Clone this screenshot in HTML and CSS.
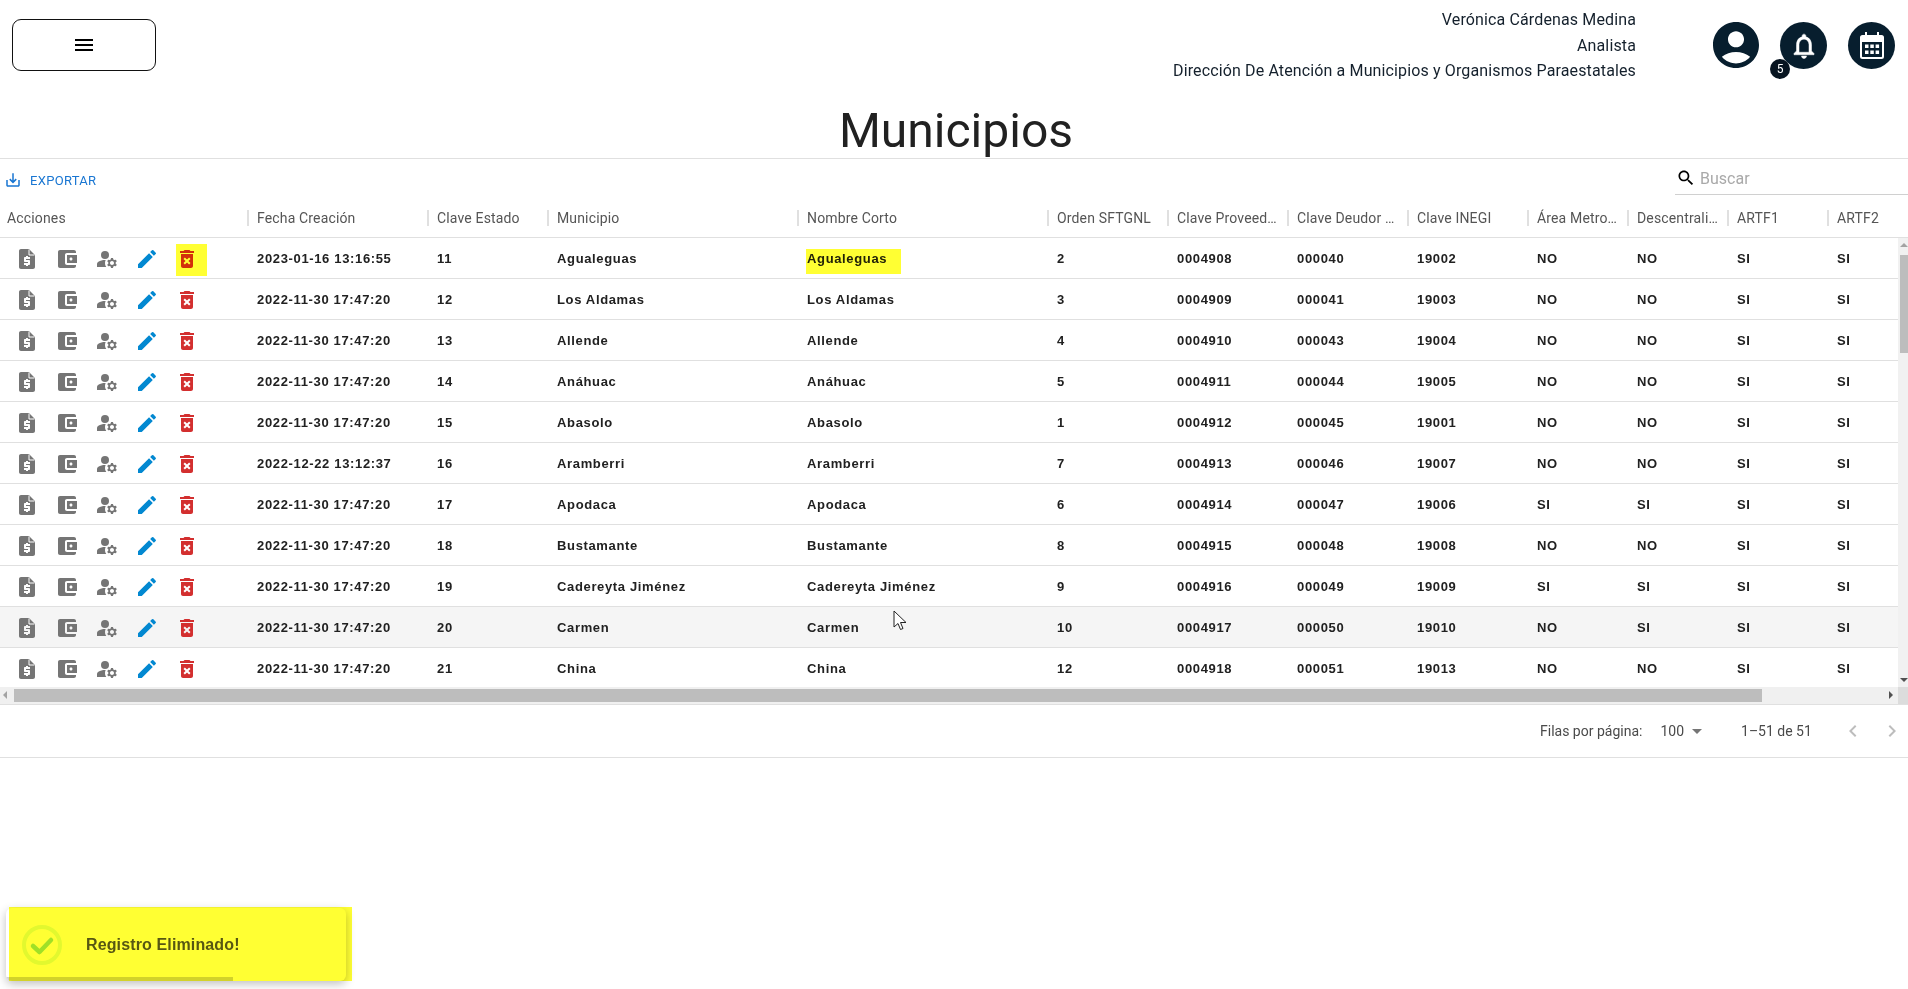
FILE: index.html
```html
<!DOCTYPE html>
<html lang="es">
<head>
  <meta charset="UTF-8" />
  <title>Municipios</title>
  <link rel="stylesheet" href="styles.css">
</head>
<body>

  <svg class="defs" width="0" height="0">
    <symbol id="i-quote" viewBox="0 0 24 24"><path d="M14 2H6c-1.100 0-1.990.9-1.990 2L4 20c0 1.100.89 2 1.990 2H18c1.100 0 2-.9 2-2V8l-6-6zm1 10h-4v1h3c.55 0 1 .45 1 1v3c0 .55-.45 1-1 1h-1v1h-2v-1H9v-2h4v-1h-3c-.55 0-1-.45-1-1v-3c0-.55.45-1 1-1h1V9h2v1h2v2z"/><path d="M14 2.500V8h5.500" fill="none" stroke="#fff" stroke-width="1"/></symbol>
    <symbol id="i-wallet" viewBox="0 0 24 24"><path d="M21 18v1c0 1.1-.9 2-2 2H5c-1.11 0-2-.9-2-2V5c0-1.1.89-2 2-2h14c1.1 0 2 .9 2 2v1h-9c-1.11 0-2 .9-2 2v8c0 1.1.89 2 2 2h9zm-9-2h10V8H12v8zm4-2.5c-.83 0-1.5-.67-1.5-1.5s.67-1.5 1.5-1.5 1.5.67 1.5 1.5-.67 1.5-1.5 1.5z"/></symbol>
    <symbol id="i-manage" viewBox="0 0 24 24"><circle cx="10" cy="8" r="4"/><path d="M10.67 13.02c-.22-.01-.44-.02-.67-.02-2.42 0-4.68.67-6.61 1.82-.88.52-1.39 1.5-1.39 2.53V20h9.26c-.79-1.13-1.26-2.51-1.26-4 0-1.07.25-2.07.67-2.98z"/><path d="M20.75 16c0-.22-.03-.42-.06-.63l1.14-1.01-1-1.73-1.45.49c-.32-.27-.68-.48-1.08-.63L18 11h-2l-.3 1.49c-.4.15-.76.36-1.08.63l-1.45-.49-1 1.73 1.14 1.01c-.03.21-.06.41-.06.63s.03.42.06.63l-1.14 1.01 1 1.73 1.45-.49c.32.27.68.48 1.08.63L16 21h2l.3-1.49c.4-.15.76-.36 1.08-.63l1.45.49 1-1.73-1.14-1.01c.03-.21.06-.41.06-.63zM17 18c-1.1 0-2-.9-2-2s.9-2 2-2 2 .9 2 2-.9 2-2 2z"/></symbol>
    <symbol id="i-edit" viewBox="0 0 24 24"><path d="M3 17.25V21h3.75L17.81 9.94l-3.75-3.75L3 17.25zM20.71 7.04c.39-.39.39-1.02 0-1.41l-2.34-2.34a.9959.9959 0 0 0-1.41 0l-1.83 1.83 3.75 3.75 1.83-1.83z"/></symbol>
    <symbol id="i-delete" viewBox="0 0 24 24"><path d="M6 19c0 1.1.9 2 2 2h8c1.1 0 2-.9 2-2V7H6v12zm2.46-7.12 1.41-1.41L12 12.59l2.12-2.12 1.41 1.41L13.41 14l2.12 2.12-1.41 1.41L12 15.41l-2.12 2.12-1.41-1.41L10.59 14l-2.13-2.12zM15.5 4l-1-1h-5l-1 1H5v2h14V4z"/></symbol>
  </svg>

  <header class="topbar">
    <button class="menu-btn" aria-label="menu">
      <svg width="24" height="24" viewBox="0 0 24 24"><path d="M3 18h18v-2H3v2zm0-5h18v-2H3v2zm0-7v2h18V6H3z"/></svg>
    </button>
    <div class="user-info">
      <div>Verónica Cárdenas Medina</div>
      <div>Analista</div>
      <div>Dirección De Atención a Municipios y Organismos Paraestatales</div>
    </div>
    <div class="user-icons">
      <svg class="avatar" viewBox="2 2 20 20"><path d="M12 2C6.48 2 2 6.48 2 12s4.48 10 10 10 10-4.48 10-10S17.52 2 12 2zm0 4c1.93 0 3.5 1.57 3.5 3.5S13.93 13 12 13s-3.5-1.57-3.5-3.5S10.07 6 12 6zm0 14c-2.03 0-4.43-.82-6.14-2.88C7.55 15.8 9.68 15 12 15s4.45.8 6.14 2.12C16.43 19.18 14.03 20 12 20z"/></svg>
      <div class="round-icon bell">
        <svg class="bell-icon" width="30" height="30" viewBox="0 0 24 24"><path d="M12 22c1.1 0 2-.9 2-2h-4c0 1.1.9 2 2 2zm6-6v-5c0-3.07-1.63-5.64-4.5-6.32V4c0-.83-.67-1.5-1.5-1.5s-1.5.67-1.5 1.5v.68C7.64 5.36 6 7.92 6 11v5l-2 2v1h16v-1l-2-2zm-2 1H8v-6c0-2.48 1.51-4.5 4-4.5s4 2.02 4 4.5v6z"/></svg>
        <span class="badge">5</span>
      </div>
      <div class="round-icon">
        <svg width="24" height="27" viewBox="0 0 24 27"><path d="M5 0h2v3h10V0h2v3h2.500A2.500 2.500 0 0 1 24 5.500v19a2.500 2.500 0 0 1-2.500 2.500h-19A2.500 2.500 0 0 1 0 24.500v-19A2.500 2.500 0 0 1 2.500 3H5zM2 10v14.500c0 .3.2.5.5.5h19c.3 0 .5-.2.5-.5V10z"/><path d="M5 12.500h3.500V16H5zM10.300 12.500h3.500V16h-3.500zM15.600 12.500h3.500V16h-3.500zM5 18.500h3.500V22H5zM10.300 18.500h3.500V22h-3.500zM15.600 18.500h3.500V22h-3.500z"/></svg>
      </div>
    </div>
  </header>

  <h1 class="page-title">Municipios</h1>

  <section class="grid">
    <div class="toolbar">
      <button class="export-btn">
        <svg width="18" height="18" viewBox="0 0 24 24"><path d="M19 12v7H5v-7H3v7c0 1.100.9 2 2 2h14c1.100 0 2-.9 2-2v-7h-2zm-6 .67l2.590-2.580L17 11.500l-5 5-5-5 1.410-1.410L11 12.670V3h2z"/></svg>
        Exportar
      </button>
      <div class="search">
        <svg width="20" height="20" viewBox="0 0 24 24"><path d="M15.500 14h-.79l-.28-.27C15.410 12.590 16 11.110 16 9.500 16 5.910 13.090 3 9.500 3S3 5.910 3 9.500 5.910 16 9.500 16c1.610 0 3.090-.59 4.230-1.570l.27.28v.79l5 4.990L20.490 19l-4.990-5zm-6 0C7.010 14 5 11.990 5 9.500S7.010 5 9.500 5 14 7.010 14 9.500 11.990 14 9.500 14z"/></svg>
        <span>Buscar</span>
      </div>
    </div>

    <div class="row head">
      <div class="head-first">Acciones</div>
      <div class="head-cell"><span>Fecha Creación</span></div>
      <div class="head-cell"><span>Clave Estado</span></div>
      <div class="head-cell"><span>Municipio</span></div>
      <div class="head-cell"><span>Nombre Corto</span></div>
      <div class="head-cell"><span>Orden SFTGNL</span></div>
      <div class="head-cell"><span>Clave Proveed…</span></div>
      <div class="head-cell"><span>Clave Deudor …</span></div>
      <div class="head-cell"><span>Clave INEGI</span></div>
      <div class="head-cell"><span>Área Metro…</span></div>
      <div class="head-cell"><span>Descentrali…</span></div>
      <div class="head-cell"><span>ARTF1</span></div>
      <div class="head-cell"><span>ARTF2</span></div>
    </div>

    <div class="body-wrap">
      <div class="rows" id="rows"></div>
      <div class="vscroll">
        <i class="arrow up"></i>
        <div class="vthumb"></div>
        <i class="arrow down"></i>
      </div>
    </div>

    <div class="hscroll">
      <i class="arrow left"></i>
      <div class="hthumb"></div>
      <i class="arrow right"></i>
      <div class="corner"></div>
    </div>

    <div class="pager">
      <span>Filas por página:</span>
      <span class="pager-size">100 <i class="caret"></i></span>
      <span class="pager-range">1–51 de 51</span>
      <svg class="chev" width="24" height="24" viewBox="0 0 24 24"><path d="M15.410 7.410 14 6l-6 6 6 6 1.410-1.410L10.830 12z"/></svg>
      <svg class="chev" width="24" height="24" viewBox="0 0 24 24"><path d="M10 6 8.590 7.410 13.170 12l-4.580 4.590L10 18l6-6z"/></svg>
    </div>
  </section>

  <!-- yellow marker drawn over the screenshot -->
  <div class="mark mark-trash"></div>
  <div class="mark mark-name"></div>

  <div class="toast">
    <svg class="toast-check" width="40" height="40" viewBox="0 0 40 40">
      <circle cx="20" cy="20" r="18" fill="none" stroke="#e2f8e6" stroke-width="4"/>
      <path d="M11 21l6.500 6L29 15" fill="none" stroke="#a0e0c0" stroke-width="4.500" stroke-linecap="round" stroke-linejoin="round"/>
    </svg>
    <span>Registro Eliminado!</span>
    <div class="toast-bar"></div>
  </div>
  <div class="mark mark-toast"></div>

  <svg class="cursor" width="14" height="21" viewBox="0 0 14 21"><path d="M1 1v16l4-3.500 2.500 6 2.500-1-2.500-6H13z" fill="#fff" stroke="#222" stroke-width="1"/></svg>

  <script>
    const data = [
      ["2023-01-16 13:16:55", 11, "Agualeguas", 2, "0004908", "000040", 19002, "NO", "NO"],
      ["2022-11-30 17:47:20", 12, "Los Aldamas", 3, "0004909", "000041", 19003, "NO", "NO"],
      ["2022-11-30 17:47:20", 13, "Allende", 4, "0004910", "000043", 19004, "NO", "NO"],
      ["2022-11-30 17:47:20", 14, "Anáhuac", 5, "0004911", "000044", 19005, "NO", "NO"],
      ["2022-11-30 17:47:20", 15, "Abasolo", 1, "0004912", "000045", 19001, "NO", "NO"],
      ["2022-12-22 13:12:37", 16, "Aramberri", 7, "0004913", "000046", 19007, "NO", "NO"],
      ["2022-11-30 17:47:20", 17, "Apodaca", 6, "0004914", "000047", 19006, "SI", "SI"],
      ["2022-11-30 17:47:20", 18, "Bustamante", 8, "0004915", "000048", 19008, "NO", "NO"],
      ["2022-11-30 17:47:20", 19, "Cadereyta Jiménez", 9, "0004916", "000049", 19009, "SI", "SI"],
      ["2022-11-30 17:47:20", 20, "Carmen", 10, "0004917", "000050", 19010, "NO", "SI"],
      ["2022-11-30 17:47:20", 21, "China", 12, "0004918", "000051", 19013, "NO", "NO"]
    ];

    const icons = ["quote", "wallet", "manage", "edit", "delete"]
      .map(name => `<svg class="act act-${name}"><use href="#i-${name}"/></svg>`)
      .join("");

    document.getElementById("rows").innerHTML = data.map((d, i) => {
      const cells = [d[0], d[1], d[2], d[2], d[3], d[4], d[5], d[6], d[7], d[8], "SI", "SI"];
      const hover = i === 9 ? " hover" : "";
      return `<div class="row data${hover}"><div class="actions">${icons}</div>` +
        cells.map(c => `<div class="cell">${c}</div>`).join("") + `</div>`;
    }).join("");
  </script>

</body>
</html>
```

FILE: styles.css
```css
* {
  box-sizing: border-box;
}

body {
  margin: 0;
  height: 989px;
  overflow: hidden;
  position: relative;
  background: #fff;
  font-family: Roboto, sans-serif;
  color: #212121;
}

.defs {
  display: block;
  height: 0;
}

.topbar {
  display: flex;
  height: 102px;
  padding-left: 12px;
}

.menu-btn {
  width: 144px;
  height: 52px;
  margin-top: 19px;
  display: flex;
  align-items: center;
  justify-content: center;
  background: #fff;
  border: 1px solid #111;
  border-radius: 9px;
}

.user-info {
  margin-left: auto;
  padding-top: 7px;
  text-align: right;
  font-size: 16px;
  line-height: 26px;
  letter-spacing: 0.13px;
  color: #14202c;
}

.user-info div:last-child {
  line-height: 24px;
}

.user-icons {
  display: flex;
  align-items: flex-start;
  gap: 21px;
  width: 272px;
  padding: 22px 0 0 77px;
}

.avatar {
  width: 46px;
  height: 46px;
  fill: #071e2e;
}

.round-icon {
  position: relative;
  width: 47px;
  height: 47px;
  display: flex;
  align-items: center;
  justify-content: center;
  background: #071e2e;
  border-radius: 50%;
  fill: #fff;
}

.bell-icon {
  stroke: #fff;
  stroke-width: 0.4;
}

.badge {
  position: absolute;
  left: -10px;
  top: 37px;
  width: 20px;
  height: 20px;
  border-radius: 50%;
  background: #071420;
  color: #fff;
  font-size: 12px;
  line-height: 20px;
  text-align: center;
}

.page-title {
  margin: 0;
  height: 56px;
  padding-left: 4px;
  text-align: center;
  font-size: 48px;
  font-weight: 400;
  line-height: 58px;
}

.grid {
  border-top: 1px solid #e0e0e0;
}

.toolbar {
  display: flex;
  justify-content: space-between;
  height: 36px;
}

.export-btn {
  display: flex;
  align-items: center;
  gap: 8px;
  height: 36px;
  padding: 6px 0 0 4px;
  border: none;
  background: none;
  color: #1976d2;
  fill: #1976d2;
  font-family: Roboto, sans-serif;
  font-size: 13px;
  letter-spacing: 0.3px;
  text-transform: uppercase;
}

.search {
  display: flex;
  align-items: center;
  gap: 4px;
  width: 233px;
  height: 36px;
  padding: 3px 0 0 1px;
  border-bottom: 1px solid #d0d0d0;
  color: #a9a9a9;
  font-size: 16px;
}

.row {
  display: grid;
  grid-template-columns: 247px 180px 120px 250px 250px 120px 120px 120px 120px 100px 100px 100px 73px;
  width: 1898px;
}

.head {
  width: 1908px;
  height: 43px;
  align-items: center;
  padding-top: 4px;
  border-bottom: 1px solid #e0e0e0;
  font-size: 14px;
  letter-spacing: 0.15px;
  color: #555;
}

.head-first {
  padding-left: 7px;
}

.head-cell span {
  display: block;
  height: 16px;
  line-height: 16px;
  padding-left: 8px;
  border-left: 2px solid #e0e0e0;
  white-space: nowrap;
}

.body-wrap {
  display: flex;
  height: 449px;
}

.rows {
  width: 1898px;
  overflow: hidden;
}

.data {
  height: 41px;
  align-items: center;
  border-bottom: 1px solid #e0e0e0;
  font-size: 13px;
  font-weight: 700;
  font-family: "Liberation Sans", sans-serif;
  letter-spacing: 0.65px;
  color: #212121;
}

.data.hover {
  background: #f5f5f5;
}

.cell {
  padding-left: 10px;
  white-space: nowrap;
}

.actions {
  display: flex;
  gap: 16px;
  padding: 2px 0 0 15px;
}

.act {
  width: 24px;
  height: 24px;
  fill: #757575;
}

.act-edit {
  fill: #0288d1;
}

.act-delete {
  fill: #d32f2f;
}

.vscroll {
  position: relative;
  width: 10px;
  background: #f1f1f1;
}

.vthumb {
  width: 8px;
  height: 98px;
  margin: 17px 0 0 2px;
  background: #bdbdbd;
}

.hscroll {
  position: relative;
  height: 17px;
  padding: 2px 0 0 14px;
  background: #f0f0f0;
}

.hthumb {
  width: 1748px;
  height: 13px;
  background: #bdbdbd;
}

.corner {
  position: absolute;
  right: 0;
  top: 0;
  width: 10px;
  height: 17px;
  background: #dcdcdc;
}

.arrow {
  position: absolute;
  width: 0;
  height: 0;
  border: 4px solid transparent;
}

.arrow.up {
  left: 2px;
  top: 1px;
  border-bottom-color: #a3a3a3;
}

.arrow.down {
  left: 2px;
  bottom: 1px;
  border-top-color: #505050;
}

.arrow.left {
  left: -1px;
  top: 4px;
  border-right-color: #a3a3a3;
}

.arrow.right {
  right: 11px;
  top: 4px;
  border-left-color: #505050;
}

.pager {
  display: flex;
  align-items: center;
  height: 54px;
  padding-left: 1540px;
  border-top: 1px solid #e0e0e0;
  border-bottom: 1px solid #e0e0e0;
  font-size: 14px;
  color: #4a4a4a;
  white-space: nowrap;
}

.pager-size {
  display: flex;
  align-items: center;
  gap: 8px;
  margin-left: 18px;
}

.caret {
  width: 0;
  height: 0;
  border: 5px solid transparent;
  border-top-color: #757575;
  border-bottom: 0;
}

.pager-range {
  margin-left: 39px;
  margin-right: 29px;
}

.chev {
  flex: none;
  fill: #bdbdbd;
  margin-right: 15px;
}

.toast {
  position: absolute;
  left: 6px;
  top: 908px;
  width: 340px;
  height: 73px;
  display: flex;
  align-items: center;
  gap: 24px;
  padding-left: 16px;
  background: #fff;
  border-radius: 6px;
  box-shadow: 0 3px 10px rgba(0, 0, 0, 0.25);
  font-family: "Liberation Sans", sans-serif;
  font-weight: 700;
  font-size: 16px;
  letter-spacing: 0.13px;
  color: #575757;
  overflow: hidden;
}

.toast-bar {
  position: absolute;
  left: 0;
  bottom: 0;
  width: 227px;
  height: 4px;
  background: #d2d2d2;
}

.mark {
  position: absolute;
  background: #ffff33;
  mix-blend-mode: multiply;
}

.mark-trash {
  left: 176px;
  top: 244px;
  width: 31px;
  height: 32px;
}

.mark-name {
  left: 806px;
  top: 249px;
  width: 95px;
  height: 25px;
}

.mark-toast {
  left: 9px;
  top: 907px;
  width: 343px;
  height: 74px;
}

.cursor {
  position: absolute;
  left: 893px;
  top: 610px;
}
```
